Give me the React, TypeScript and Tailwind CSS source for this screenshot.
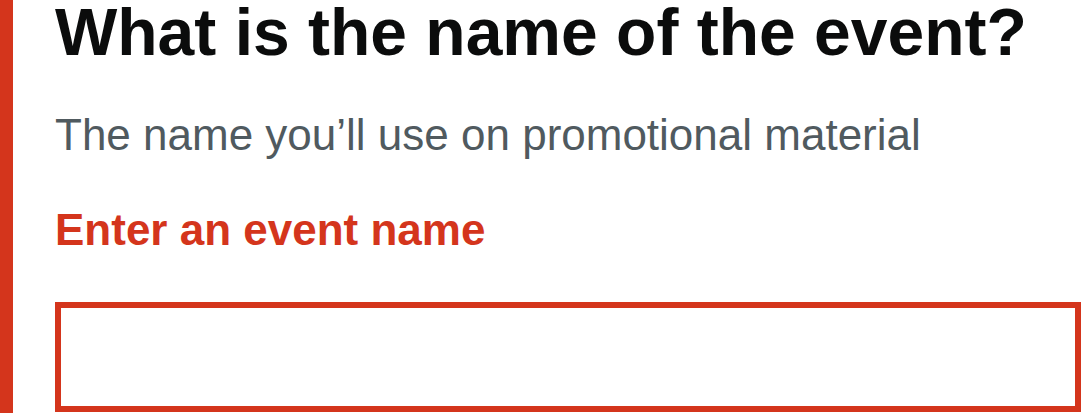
export default function App() {
  return (
    <div className="min-h-[413px] bg-white font-['Liberation_Sans',Arial,sans-serif]">
      <div className="flex min-h-[413px] flex-col border-l-[13px] border-[#d4351c] pl-[42px]">
        <h1 className="text-[66px] leading-[64px] font-bold text-[#0b0c0c]">
          What is the name of the event?
        </h1>
        <p className="mt-[46px] text-[44px] leading-[50px] text-[#505a5f]">
          The name you’ll use on promotional material
        </p>
        <p className="mt-[46px] text-[44px] leading-[48px] font-bold text-[#d4351c]">
          Enter an event name
        </p>
        <input
          type="text"
          aria-label="Event name"
          className="mt-[48px] h-[110px] w-full border-[6px] border-[#d4351c] bg-white px-4 text-[44px] outline-none"
        />
      </div>
    </div>
  )
}
